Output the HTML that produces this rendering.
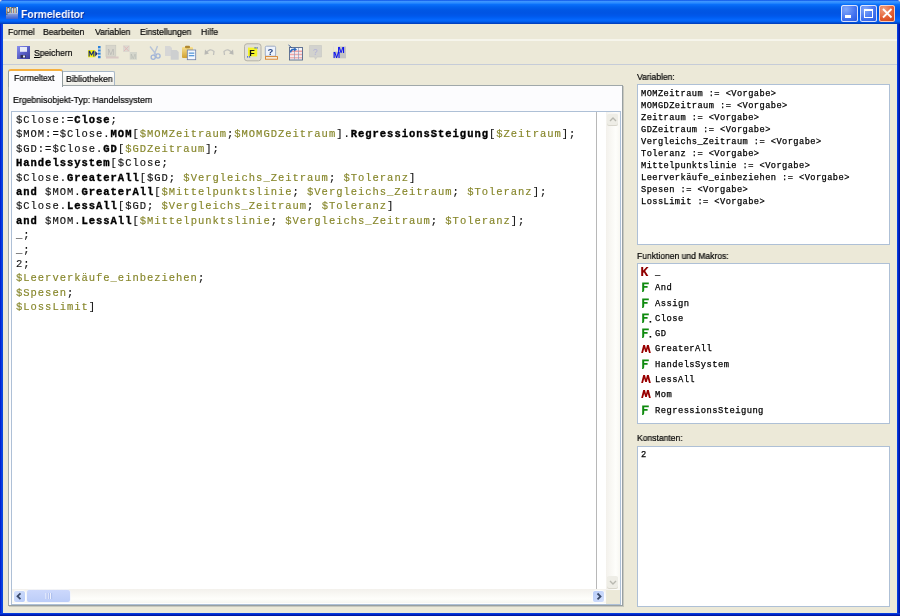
<!DOCTYPE html>
<html><head><meta charset="utf-8">
<style>
*{margin:0;padding:0;box-sizing:border-box}
html,body{width:900px;height:616px;overflow:hidden;background:#D8DCE4}
body{position:relative;font-family:"Liberation Sans",sans-serif}
.a{position:absolute}
#win{left:0;top:0;width:900px;height:616px;background:#0831D9;border-radius:4px 4px 0 0;overflow:hidden}
#title{left:0;top:0;width:900px;height:24px;
 background:linear-gradient(#0A4FE6 0px,#3D95FF 1.5px,#2A8BFF 3px,#0A70FA 4.5px,#0262EE 7px,#0057E5 10px,#0054E3 13px,#0058EB 16px,#0060F5 18px,#0568FE 20px,#0060EF 21.5px,#0048D0 23px,#003AB0 24px)}
#lb{left:0;top:24px;width:3px;height:592px;background:linear-gradient(90deg,#0018C8,#0A3AE0 50%,#0850E0)}
#rb{left:897px;top:24px;width:3px;height:592px;background:linear-gradient(90deg,#0848E8,#0024C8 50%,#00108A)}
#bb{left:0;top:613px;width:900px;height:3px;background:linear-gradient(#0848E8,#0024C8 50%,#00108A)}
#client{left:3px;top:24px;width:894px;height:589px;background:#ECE9D8}
.ttl{left:21.2px;top:7.8px;color:#fff;font-weight:bold;font-size:11.8px;line-height:13px;transform:scaleX(0.875);transform-origin:0 0;text-shadow:1px 1px 0 #0A2A9A;white-space:nowrap}
.t{font-size:9px;color:#000;-webkit-text-stroke:0.2px #000;white-space:nowrap;transform:scaleX(0.95);transform-origin:0 0;line-height:11px}
.sep1{left:3px;top:39.2px;width:894px;height:1.5px;background:#F6F5EC}
.sep2{left:3px;top:64px;width:894px;height:1px;background:#C6CCD8}
.box{background:#fff;border:1px solid #7F9DB9}
.mono{font-family:"Liberation Mono",monospace}
#code{left:15.5px;top:113.3px;font-size:10.5px;letter-spacing:0.975px;line-height:14.4px;white-space:pre;color:#111;-webkit-text-stroke:0.15px #111}
#code b{font-weight:bold;color:#000;-webkit-text-stroke:0.35px #000}
#code i{font-style:normal;color:#86862A;-webkit-text-stroke:0.15px #86862A}
.vars{font-size:8.7px;letter-spacing:0.43px;line-height:12px;white-space:pre;color:#000;-webkit-text-stroke:0.25px #000}
.fl{font-size:8.8px;letter-spacing:0.45px;white-space:pre;color:#000;-webkit-text-stroke:0.25px #000}
.ic{font-weight:bold;font-size:10.5px;line-height:10px}
.K{color:#990000}.F{color:#108A10}
.t,.mono,.ttl{will-change:transform}
</style></head><body>
<div id="win" class="a">
 <div id="title" class="a"></div>
 <div id="lb" class="a"></div>
 <div id="rb" class="a"></div>
 <div id="bb" class="a"></div>
 <div id="client" class="a"></div>
 <!-- title icon -->
 <div class="a" style="left:6px;top:7px;width:11.5px;height:12px;background:linear-gradient(#f4f4f4,#d4d4d8 48%,#8098d8 62%,#3A60D0)"></div>
 <div class="a" style="left:6.3px;top:5.3px;font-size:10.5px;line-height:9px;color:#404040;transform:scaleX(0.78);transform-origin:0 0;letter-spacing:-0.3px">pm</div>
 <div class="a ttl">Formeleditor</div>
 <!-- title buttons -->
 <div class="a" style="left:841px;top:5px;width:16.5px;height:17px;border-radius:2.5px;box-shadow:inset 0 0 0 1px rgba(255,255,255,0.8);background:radial-gradient(circle at 30% 25%,#82A8FA,#4272F0 55%,#2455DC)"></div>
 <div class="a" style="left:845px;top:15.3px;width:6px;height:2.5px;background:#fff"></div>
 <div class="a" style="left:860px;top:5px;width:16.5px;height:17px;border-radius:2.5px;box-shadow:inset 0 0 0 1px rgba(255,255,255,0.8);background:radial-gradient(circle at 30% 25%,#82A8FA,#4272F0 55%,#2455DC)"></div>
 <div class="a" style="left:864px;top:9px;width:8.5px;height:9px;border:1px solid #fff;border-top-width:2.5px"></div>
 <div class="a" style="left:878.5px;top:5px;width:16.5px;height:17px;border-radius:2.5px;box-shadow:inset 0 0 0 1px rgba(255,235,225,0.8);background:radial-gradient(circle at 30% 25%,#F0A080,#E25C30 55%,#C23A10)"></div>
 <svg class="a" style="left:878.5px;top:5px" width="17" height="17"><path d="M4 4 L12.5 12.5 M12.5 4 L4 12.5" stroke="#fff" stroke-width="1.8"/></svg>

 <!-- menu -->
 <div class="a t" style="left:7.5px;top:26.5px">Formel</div>
 <div class="a t" style="left:43px;top:26.5px">Bearbeiten</div>
 <div class="a t" style="left:95px;top:26.5px">Variablen</div>
 <div class="a t" style="left:140px;top:26.5px">Einstellungen</div>
 <div class="a t" style="left:200.5px;top:26.5px">Hilfe</div>
 <div class="a sep1"></div>
 <div class="a sep2"></div>

 <!-- toolbar -->
 <div class="a t" style="left:34px;top:47.5px"><u>S</u>peichern</div>
 <svg class="a" style="left:0;top:40px" width="360" height="24" viewBox="0 40 360 24">
 <defs>
  <linearGradient id="fl" x1="0" y1="0" x2="1" y2="1"><stop offset="0" stop-color="#8A90F0"/><stop offset="0.5" stop-color="#5A60C8"/><stop offset="1" stop-color="#3A3E98"/></linearGradient>
  <linearGradient id="cb" x1="0" y1="0" x2="0" y2="1"><stop offset="0" stop-color="#F8E090"/><stop offset="1" stop-color="#D0A030"/></linearGradient>
 </defs>
 <!-- save -->
 <rect x="17" y="46" width="13" height="13" fill="url(#fl)"/>
 <rect x="20" y="47" width="7" height="4.8" fill="#E8ECF8"/>
 <rect x="20.6" y="55" width="5" height="3" fill="#303050"/>
 <rect x="23" y="55.5" width="2" height="2" fill="#E0E8F8"/>
 <!-- M+ -->
 <rect x="88" y="50" width="7.3" height="7.3" fill="#F4F418"/>
 <path d="M88.6 56.6 V50.8 H90 L91.5 54 L93 50.8 H94.4 V56.6 H93.3 V52.8 L91.9 55.6 H91.1 L89.7 52.8 V56.6Z" fill="#1A2A70"/>
 <path d="M95.2 51 L97.8 53.7 L95.2 56.4Z" fill="#1A2A70"/>
 <rect x="98" y="46" width="2.6" height="2.6" fill="#2A82DC"/><rect x="98" y="49.3" width="2.6" height="2.4" fill="#2A82DC"/><rect x="98" y="52.4" width="2.6" height="2.4" fill="#2A82DC"/><rect x="98" y="55.6" width="2.6" height="2.6" fill="#2A82DC"/>
 <rect x="98.2" y="48.6" width="2.2" height="0.7" fill="#E8F4FF"/><rect x="98.2" y="51.7" width="2.2" height="0.7" fill="#E8F4FF"/><rect x="98.2" y="54.8" width="2.2" height="0.8" fill="#E8F4FF"/>
 <!-- disabled M -->
 <rect x="106" y="45.3" width="9.7" height="11" fill="#D8D6CC" stroke="#CACAC0" stroke-width="0.8"/>
 <text x="107.3" y="54.6" font-family="Liberation Sans" font-size="8.5" fill="#B8B8B4">M</text>
 <rect x="106" y="56.5" width="12.6" height="2" fill="#D8C8C4"/>
 <!-- disabled X M -->
 <rect x="123" y="45.3" width="6.7" height="6.7" fill="#DCD8D0"/>
 <path d="M124 46.3 L128.7 51 M128.7 46.3 L124 51" stroke="#E0B8B8" stroke-width="0.9"/>
 <rect x="129.7" y="52" width="7.3" height="7.7" fill="#D4D6CC"/>
 <text x="130.3" y="58.5" font-family="Liberation Sans" font-size="7" fill="#B8BCB4">M</text>
 <!-- scissors -->
 <path d="M150 46.5 L156.5 55 M157.5 46 L154 55" stroke="#B8C4D8" stroke-width="1.4" fill="none"/>
 <circle cx="153.2" cy="57.2" r="2.1" stroke="#A0B4D8" stroke-width="1.3" fill="none"/>
 <circle cx="158" cy="56" r="2.1" stroke="#A0B4D8" stroke-width="1.3" fill="none"/>
 <!-- copy -->
 <path d="M165 46 H170 L172 48 V56 H165Z" fill="#D6D6D6"/>
 <path d="M170.7 50 H176.7 L178.7 52 V59.7 H170.7Z" fill="#CDCFD0"/>
 <!-- paste -->
 <rect x="182" y="47" width="11" height="11" rx="1" fill="url(#cb)"/>
 <rect x="185" y="45.8" width="5" height="2.5" rx="1" fill="#B08830"/>
 <rect x="187.3" y="50" width="8.4" height="9.7" fill="#F4F8FF" stroke="#6A7EA8" stroke-width="0.8"/>
 <rect x="188.8" y="52.5" width="5.5" height="1.3" fill="#5A9AD8"/>
 <rect x="188.8" y="55" width="5.5" height="1.3" fill="#5A9AD8"/>
 <!-- undo redo -->
 <path d="M206 53 Q210 47.5 214 51.5 L213.5 55" stroke="#C0C0BC" stroke-width="1.3" fill="none"/>
 <path d="M204.5 54.8 L205 49.5 L209 53.5Z" fill="#B8B8B4"/>
 <path d="M232 53 Q228 47.5 224 51.5 L224.5 55" stroke="#C0C0BC" stroke-width="1.3" fill="none"/>
 <path d="M233.6 54.8 L233 49.5 L229 53.5Z" fill="#B8B8B4"/>
 <!-- pressed F -->
 <rect x="244.5" y="43.8" width="16.5" height="17" rx="2.5" fill="#E2E0D6" stroke="#B4B2A8" stroke-width="1"/>
 <rect x="248" y="47.6" width="9.2" height="8.8" fill="#F4F42C"/>
 <text x="249.2" y="55.8" font-family="Liberation Sans" font-weight="bold" font-size="9" fill="#111">F</text>
 <rect x="254.5" y="47.3" width="1.2" height="1.2" fill="#2050D0"/><rect x="256.5" y="47.3" width="1.2" height="1.2" fill="#2050D0"/>
 <rect x="247" y="56.3" width="1.2" height="1.2" fill="#2050D0"/><rect x="249" y="56.3" width="1.2" height="1.2" fill="#2050D0"/>
 <!-- help doc -->
 <rect x="265.3" y="46.2" width="10.3" height="10" rx="1.2" fill="#EEF3FC" stroke="#8A9CBC" stroke-width="0.8"/>
 <text x="267.4" y="54.8" font-family="Liberation Sans" font-weight="bold" font-size="9.5" fill="#2A4A88">?</text>
 <rect x="265.5" y="56.6" width="12" height="2.6" fill="#F8F0E0" stroke="#D8802A" stroke-width="0.9"/>
 <!-- table -->
 <rect x="289.5" y="47.5" width="13" height="12.5" fill="#F4F4F8" stroke="#56688A" stroke-width="0.9"/>
 <rect x="290" y="50.5" width="12" height="1.6" fill="#F0A0A0"/><rect x="290" y="53.7" width="12" height="1.6" fill="#F0A8A8"/><rect x="290" y="56.9" width="12" height="1.6" fill="#F0B0B0"/>
 <path d="M294.5 48 V59.5 M298.5 48 V59.5" stroke="#8A9ABA" stroke-width="0.7"/>
 <path d="M290.5 52.5 Q291 48.5 295.5 49.5" stroke="#2A6AC0" stroke-width="1.6" fill="none"/>
 <path d="M294.5 47.5 L297 49.8 L294 51.2Z" fill="#2A6AC0"/>
 <path d="M288.5 45 L292 48" stroke="#3A5A98" stroke-width="1"/>
 <!-- disabled bubble -->
 <path d="M309.5 45.5 H321.5 V57 H317 L315.5 59.4 L314.5 57 H309.5Z" fill="#D2D2CE" stroke="#C8C8C4" stroke-width="0.6"/>
 <text x="313" y="54.5" font-family="Liberation Sans" font-size="8.5" fill="#B0B0D8">?</text>
 <!-- MM -->
 <rect x="333.5" y="46.5" width="12.5" height="11.8" fill="#C4C4C4"/>
 <rect x="333.3" y="46" width="5" height="5.5" fill="#ECE9D8"/>
 <text x="337.4" y="52.6" font-family="Liberation Sans" font-weight="bold" font-size="8.6" fill="#0A10F0" transform="scale(1,1)">M</text>
 <text x="333" y="58.4" font-family="Liberation Sans" font-weight="bold" font-size="8.6" fill="#0A10F0">M</text>
</svg>

 <!-- tabs -->
 <div class="a" style="left:8px;top:85px;width:614.5px;height:521.3px;background:#FCFCFE;border:1px solid #A0A8AA;border-right-color:#98A0A2;border-bottom-color:#98A0A2;box-shadow:1px 1px 0 #C8C8BE"></div>
 <div class="a" style="left:62.3px;top:70.8px;width:53px;height:14.7px;background:linear-gradient(#fff,#F0EFE8);border:1px solid #A8B8C8;border-bottom:none;border-radius:2px 2px 0 0"></div>
 <div class="a t" style="left:65.5px;top:73.8px">Bibliotheken</div>
 <div class="a" style="left:8.3px;top:69.3px;width:54.3px;height:18px;background:#FCFCFE;border:1px solid #919B9C;border-bottom:none;border-radius:3px 3px 0 0;border-top:2px solid #F5B040"></div>
 <div class="a t" style="left:14px;top:72.5px">Formeltext</div>
 <div class="a t" style="left:12.7px;top:94.5px;transform:scaleX(0.97)">Ergebnisobjekt-Typ: Handelssystem</div>

 <!-- editor -->
 <div class="a box" style="left:11px;top:111px;width:610px;height:494px;border-color:#AEC0D6"></div>
 <div class="a" style="left:596px;top:112px;width:1px;height:477px;background:#B8B8B8"></div>
 <div class="a" style="left:606px;top:112px;width:14px;height:477.5px;background:linear-gradient(90deg,#F3F1EC,#FEFEFB 70%,#F8F7F2)"></div>
 <div class="a" style="left:607.3px;top:113px;width:11.2px;height:12.3px;border-radius:2px;background:#EEEDE6;box-shadow:0 0.6px 0 #FFF inset,0 1px 0 #D8D6CC"></div>
 <svg class="a" style="left:607px;top:113px" width="12" height="13"><path d="M3 8 L6 5 L9 8" stroke="#B8B8B0" stroke-width="1.4" fill="none"/></svg>
 <div class="a" style="left:607.1px;top:576.2px;width:11px;height:12px;border-radius:2px;background:#EEEDE6;box-shadow:0 1px 0 #D8D6CC"></div>
 <svg class="a" style="left:607px;top:576px" width="12" height="13"><path d="M3 5 L6 8 L9 5" stroke="#B8B8B0" stroke-width="1.4" fill="none"/></svg>
 <div class="a" style="left:606px;top:589.5px;width:14px;height:14px;background:#ECE9D8"></div>
 <div class="a" style="left:12px;top:589px;width:594px;height:14px;background:linear-gradient(#F3F1EC,#FEFEFB 70%,#F8F7F2)"></div>
 <div class="a" style="left:13.7px;top:590.7px;width:11.3px;height:11.1px;border-radius:2px;background:linear-gradient(135deg,#D4E0FC,#B8CCF8);box-shadow:0 0 0 0.6px #fff"></div>
 <svg class="a" style="left:13px;top:590px" width="13" height="13"><path d="M7.5 3.3 L4.5 6.2 L7.5 9.1" stroke="#3A4A6A" stroke-width="1.8" fill="none"/></svg>
 <div class="a" style="left:27.2px;top:590.2px;width:43px;height:11.6px;border-radius:2px;background:linear-gradient(#CCD8FC,#BCCDF8);box-shadow:0 0 0 0.6px #F0F4FF"></div>
 <svg class="a" style="left:40px;top:590px" width="20" height="12"><path d="M6 3 V9 M8.3 3 V9 M10.6 3 V9" stroke="#F4F6FF" stroke-width="1"/><path d="M7 3 V9 M9.3 3 V9 M11.6 3 V9" stroke="#A0B4E8" stroke-width="0.7"/></svg>
 <div class="a" style="left:592.8px;top:590.8px;width:11.7px;height:11.3px;border-radius:2px;background:linear-gradient(135deg,#B8CCF8,#D4E0FC);box-shadow:0 0 0 0.6px #fff"></div>
 <svg class="a" style="left:592px;top:590px" width="13" height="13"><path d="M5.5 3.5 L8.5 6.4 L5.5 9.3" stroke="#3A4A6A" stroke-width="1.8" fill="none"/></svg>
 <div id="code" class="a mono">$Close:=<b>Close</b>;
$MOM:=$Close.<b>MOM</b>[<i>$MOMZeitraum</i>;<i>$MOMGDZeitraum</i>].<b>RegressionsSteigung</b>[<i>$Zeitraum</i>];
$GD:=$Close.<b>GD</b>[<i>$GDZeitraum</i>];
<b>Handelssystem</b>[$Close;
$Close.<b>GreaterAll</b>[$GD; <i>$Vergleichs_Zeitraum</i>; <i>$Toleranz</i>]
<b>and</b> $MOM.<b>GreaterAll</b>[<i>$Mittelpunktslinie</i>; <i>$Vergleichs_Zeitraum</i>; <i>$Toleranz</i>];
$Close.<b>LessAll</b>[$GD; <i>$Vergleichs_Zeitraum</i>; <i>$Toleranz</i>]
<b>and</b> $MOM.<b>LessAll</b>[<i>$Mittelpunktslinie</i>; <i>$Vergleichs_Zeitraum</i>; <i>$Toleranz</i>];
_;
_;
2;
<i>$Leerverkäufe_einbeziehen</i>;
<i>$Spesen</i>;
<i>$LossLimit</i>]</div>

 <!-- right panel -->
 <div class="a t" style="left:637px;top:71.5px">Variablen:</div>
 <div class="a box" style="left:637px;top:84px;width:253px;height:161px;border-color:#AEC0D6"></div>
 <div class="a mono vars" style="left:640.5px;top:88.3px">MOMZeitraum := &lt;Vorgabe&gt;
MOMGDZeitraum := &lt;Vorgabe&gt;
Zeitraum := &lt;Vorgabe&gt;
GDZeitraum := &lt;Vorgabe&gt;
Vergleichs_Zeitraum := &lt;Vorgabe&gt;
Toleranz := &lt;Vorgabe&gt;
Mittelpunktslinie := &lt;Vorgabe&gt;
Leerverkäufe_einbeziehen := &lt;Vorgabe&gt;
Spesen := &lt;Vorgabe&gt;
LossLimit := &lt;Vorgabe&gt;</div>
 <div class="a t" style="left:637px;top:251px">Funktionen und Makros:</div>
 <div class="a box" style="left:637px;top:263px;width:253px;height:161px;border-color:#AEC0D6"></div>
 <svg class="a" style="left:640px;top:266.0px" width="12" height="12"><path d="M1.2 1 H3.2 V4.6 L6.4 1 H8.6 L5.2 4.9 L8.4 9.9 H6.1 L3.9 6.3 L3.2 7.1 V9.9 H1.2Z" fill="#900000"/></svg>
 <div class="a mono fl" style="left:655.3px;top:267.9px;line-height:10px">_</div>
 <svg class="a" style="left:640px;top:281.3px" width="14" height="12"><path d="M2.2 1.5 H8.8 V3.2 H4.2 V5.1 H7.6 V6.8 H4.2 V9.2 Q4 10.3 3.2 11 L2 11 Q2.2 10.3 2.2 9.2Z" fill="#0E8A0E"/></svg>
 <div class="a mono fl" style="left:655.3px;top:283.2px;line-height:10px">And</div>
 <svg class="a" style="left:640px;top:296.6px" width="14" height="12"><path d="M2.2 1.5 H8.8 V3.2 H4.2 V5.1 H7.6 V6.8 H4.2 V9.2 Q4 10.3 3.2 11 L2 11 Q2.2 10.3 2.2 9.2Z" fill="#0E8A0E"/></svg>
 <div class="a mono fl" style="left:655.3px;top:298.5px;line-height:10px">Assign</div>
 <svg class="a" style="left:640px;top:311.9px" width="14" height="12"><path d="M2.2 1.5 H8.8 V3.2 H4.2 V5.1 H7.6 V6.8 H4.2 V9.2 Q4 10.3 3.2 11 L2 11 Q2.2 10.3 2.2 9.2Z" fill="#0E8A0E"/><rect x="9.6" y="9" width="1.6" height="1.6" fill="#000"/></svg>
 <div class="a mono fl" style="left:655.3px;top:313.8px;line-height:10px">Close</div>
 <svg class="a" style="left:640px;top:327.2px" width="14" height="12"><path d="M2.2 1.5 H8.8 V3.2 H4.2 V5.1 H7.6 V6.8 H4.2 V9.2 Q4 10.3 3.2 11 L2 11 Q2.2 10.3 2.2 9.2Z" fill="#0E8A0E"/><rect x="9.6" y="9" width="1.6" height="1.6" fill="#000"/></svg>
 <div class="a mono fl" style="left:655.3px;top:329.1px;line-height:10px">GD</div>
 <svg class="a" style="left:640px;top:342.5px" width="12" height="12"><path d="M1.2 10 L3.2 2 H5 L6 6 L7 2 H8.8 L10.8 10 H9 L7.8 5.5 L6.8 9 H5.2 L4.2 5.5 L3 10Z" fill="#990000"/></svg>
 <div class="a mono fl" style="left:655.3px;top:344.4px;line-height:10px">GreaterAll</div>
 <svg class="a" style="left:640px;top:357.8px" width="14" height="12"><path d="M2.2 1.5 H8.8 V3.2 H4.2 V5.1 H7.6 V6.8 H4.2 V9.2 Q4 10.3 3.2 11 L2 11 Q2.2 10.3 2.2 9.2Z" fill="#0E8A0E"/></svg>
 <div class="a mono fl" style="left:655.3px;top:359.7px;line-height:10px">HandelsSystem</div>
 <svg class="a" style="left:640px;top:373.1px" width="12" height="12"><path d="M1.2 10 L3.2 2 H5 L6 6 L7 2 H8.8 L10.8 10 H9 L7.8 5.5 L6.8 9 H5.2 L4.2 5.5 L3 10Z" fill="#990000"/></svg>
 <div class="a mono fl" style="left:655.3px;top:375.0px;line-height:10px">LessAll</div>
 <svg class="a" style="left:640px;top:388.4px" width="12" height="12"><path d="M1.2 10 L3.2 2 H5 L6 6 L7 2 H8.8 L10.8 10 H9 L7.8 5.5 L6.8 9 H5.2 L4.2 5.5 L3 10Z" fill="#990000"/></svg>
 <div class="a mono fl" style="left:655.3px;top:390.3px;line-height:10px">Mom</div>
 <svg class="a" style="left:640px;top:403.7px" width="14" height="12"><path d="M2.2 1.5 H8.8 V3.2 H4.2 V5.1 H7.6 V6.8 H4.2 V9.2 Q4 10.3 3.2 11 L2 11 Q2.2 10.3 2.2 9.2Z" fill="#0E8A0E"/></svg>
 <div class="a mono fl" style="left:655.3px;top:405.6px;line-height:10px">RegressionsSteigung</div>
 <div class="a t" style="left:637px;top:433px">Konstanten:</div>
 <div class="a box" style="left:637px;top:446px;width:253px;height:161px;border-color:#AEC0D6"></div>
 <div class="a mono vars" style="left:640.5px;top:449.3px">2</div>
</div>
</body></html>
